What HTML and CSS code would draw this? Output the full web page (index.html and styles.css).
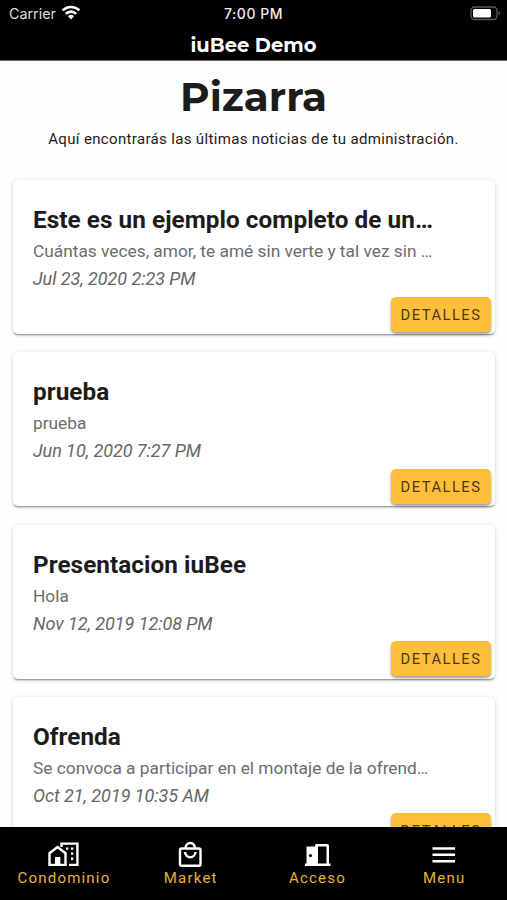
FILE: index.html
```html
<!DOCTYPE html>
<html lang="es">
<head>
<meta charset="utf-8">
<title>iuBee Demo</title>
<link rel="stylesheet" href="styles.css">
</head>
<body>
<div class="app">
  <header class="topbar">
    <div class="status">
      <div class="carrier"><span>Carrier</span>
        <svg class="wifi" viewBox="0 0 20 15" width="20" height="15"><g fill="none" stroke="#fff" stroke-width="2.6"><path d="M1.6 5.4a12 12 0 0 1 16.8 0"/><path d="M4.8 8.8a7.4 7.4 0 0 1 10.4 0"/></g><path d="M10 14.5l-3-3.2a4.3 4.3 0 0 1 6 0z" fill="#fff"/></svg>
      </div>
      <div class="time">7:00 PM</div>
      <svg class="battery" viewBox="0 0 31 15" width="31" height="15"><rect x="1" y="1" width="26" height="12.5" rx="3.5" fill="none" stroke="#555" stroke-width="1.4"/><rect x="3" y="3" width="18" height="8.5" rx="1.6" fill="#fff"/><path d="M28.5 5v4.5c2-.8 2-3.700 0-4.500z" fill="#555"/></svg>
    </div>
    <div class="appname">iuBee Demo</div>
  </header>
  <main class="content">
    <h1>Pizarra</h1>
    <p class="intro">Aquí encontrarás las últimas noticias de tu administración.</p>
    <section class="list">
      <article class="card"><h2>Este es un ejemplo completo de un…</h2><p class="text">Cuántas veces, amor, te amé sin verte y tal vez sin …</p><p class="date">Jul 23, 2020 2:23 PM</p><button>DETALLES</button></article>
      <article class="card"><h2>prueba</h2><p class="text">prueba</p><p class="date">Jun 10, 2020 7:27 PM</p><button>DETALLES</button></article>
      <article class="card"><h2>Presentacion iuBee</h2><p class="text">Hola</p><p class="date">Nov 12, 2019 12:08 PM</p><button>DETALLES</button></article>
      <article class="card"><h2>Ofrenda</h2><p class="text">Se convoca a participar en el montaje de la ofrend…</p><p class="date">Oct 21, 2019 10:35 AM</p><button>DETALLES</button></article>
    </section>
  </main>
  <nav class="tabs">
    <a><svg viewBox="0 0 32 26" width="32" height="26"><g fill="none" stroke="#fff" stroke-width="2.4"><path d="M2.500 23.900V12.200L10.500 6l8 6.200v11.700z"/><path d="M14.500 6V2.600h15.900v21.300H22"/></g><path d="M8 24.500v-8.500h5.400v8.500z" fill="#fff"/><path d="M19 6.400h2.300v2.300H19zM24 6.400h2.300v2.300H24zM24 11.500h2.300v2.300H24zM24 16.600h2.300v2.300H24z" fill="#fff"/></svg><span>Condominio</span></a>
    <a><svg viewBox="0 0 32 26" width="32" height="26"><g fill="none" stroke="#fff" stroke-width="2.400"><rect x="6" y="7.500" width="20.500" height="17.200" rx="1.500"/><path d="M11.500 7.500a4.800 5.500 0 0 1 9.600 0M11 11a5.200 5.200 0 0 0 10.400 0"/></g></svg><span>Market</span></a>
    <a><svg viewBox="0 0 32 26" width="32" height="26"><path d="M4 22.500h1.500V5.500H14V4.500q0-1.500 1.500-1.500H26q2 0 2 2v17.500h1.500V25H4zM17 5.500v17h8.500v-17z" fill="#fff" fill-rule="evenodd"/><circle cx="9.500" cy="14.500" r="1.600"/></svg><span>Acceso</span></a>
    <a><svg viewBox="0 0 32 26" width="32" height="26"><path d="M4.500 6.300H27v2.500H4.500zM4.500 12.600H27v2.500H4.500zM4.500 18.900H27v2.500H4.500z" fill="#fff"/></svg><span>Menu</span></a>
  </nav>
</div>
</body>
</html>
```
FILE: styles.css
```css
* { box-sizing: border-box; }
body { margin: 0; background: #fff; font-family: Roboto, sans-serif; color: #1c1c1c; }
h1, h2, p { margin: 0; font-size: inherit; }
.app { height: 900px; display: flex; flex-direction: column; overflow: hidden; }
.topbar { flex: none; height: 61px; background: #000; color: #fff; border-bottom: 1px solid #666; }
.status { height: 28px; padding: 0 6px 0 9px; display: grid; grid-template-columns: 1fr auto 1fr; align-items: center; }
.carrier { display: flex; align-items: center; gap: 5px; font: 14.300px/28px Inter, sans-serif; color: #ddd; }
.wifi { margin-top: -3px; }
.time { font: 500 14px/28px Inter, sans-serif; letter-spacing: .5px; color: #eee; margin-right: 3px; }
.battery { justify-self: end; margin-top: -1px; }
.appname { text-align: center; font: 700 19.500px/34px Montserrat, Inter, sans-serif; }
.content { flex: 1; min-height: 0; overflow: hidden; background: #fefefe; }
h1 { height: 67px; padding-top: 8px; text-align: center; font: 700 40.500px/56px Montserrat, Inter, sans-serif; }
.intro { height: 22px; text-align: center; font-size: 15px; line-height: 22px; letter-spacing: .34px; white-space: nowrap; }
.list { padding: 30px 12.500px 0 13px; display: grid; gap: 18.300px; }
.card { height: 154px; padding: 24px 4px 2.500px 20px; display: flex; flex-direction: column; border-radius: 5px; background: #fff; box-shadow: 0 2px 2px -1px rgba(0,0,0,.4), 0 1px 4px rgba(0,0,0,.17); white-space: nowrap; }
h2 { font-size: 24.300px; line-height: 32px; font-weight: 700; letter-spacing: .05px; }
.text { font-size: 17.300px; line-height: 31px; color: #6c6c6c; letter-spacing: .01px; }
.date { font-size: 18px; line-height: 23px; color: #666; font-style: italic; letter-spacing: -.05px; }
button { margin-top: auto; align-self: flex-end; width: 100px; height: 35px; padding: 1px 0 0 1px; border: 0; border-radius: 5px; background: #ffbe3a; color: #4c3816; font: 400 14.700px Roboto, sans-serif; letter-spacing: 1.500px; box-shadow: 0 2px 3px rgba(0,0,0,.4); }
.tabs { flex: none; height: 73px; background: #000; display: grid; grid-template-columns: repeat(4, 1fr); }
.tabs a { display: flex; flex-direction: column; align-items: center; padding-top: 14px; color: #e9b13c; font-size: 15px; line-height: 22px; letter-spacing: 1.200px; }
.tabs span { padding-left: 1.200px; }
```
